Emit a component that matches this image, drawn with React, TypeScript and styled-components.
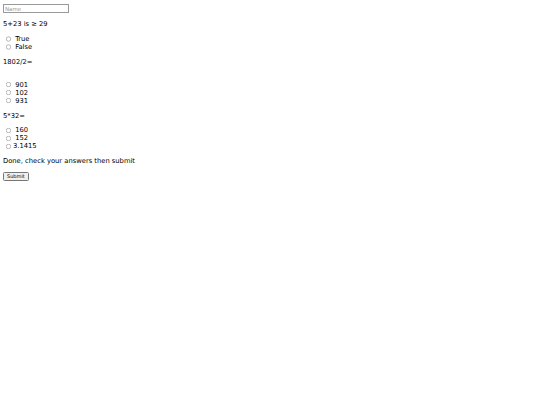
import React from 'react';
import styled, { createGlobalStyle } from 'styled-components';

const GlobalStyle = createGlobalStyle`
  body {
    margin: 4px 3px;
    background: #fff;
    color: #000;
    font-family: "DejaVu Sans", Verdana, sans-serif;
  }
`;

// the page was captured at half scale, so the whole form is zoomed down
const QuizForm = styled.form`
  zoom: 0.5;
  font-size: 13.5px;
`;

const NameInput = styled.input`
  font-family: "DejaVu Sans", Verdana, sans-serif;
  font-size: 11px;
  width: 124px;
  height: 12px;
  padding: 1px 2px;
  border: 1px solid #999;
  color: #000;
  &::placeholder {
    color: #999;
  }
`;

const Question = styled.p`
  margin: 13.8px 0;
  line-height: 16px;
`;

const Choices = styled.div<{ $gap?: boolean }>`
  margin-top: ${(p) => (p.$gap ? '30px' : '0')};
  display: flex;
  flex-direction: column;
`;

const Choice = styled.label`
  display: flex;
  align-items: center;
  height: 16px;
  input {
    margin: 0 4px 0 5px;
    width: 11px;
    height: 11px;
  }
`;

const ChoiceText = styled.span`
  white-space: pre;
`;

const SubmitButton = styled.button`
  font-family: "DejaVu Sans", Verdana, sans-serif;
  font-size: 10px;
  padding: 1px 6px;
  margin-top: -3px;
`;

// the last answer has no space after its radio in the original markup
const quiz = [
  { q: '5+23 is ≥ 29', opts: [' True', ' False'], gap: false },
  { q: '1802/2=', opts: [' 901', ' 102', ' 931'], gap: true },
  { q: '5*32=', opts: [' 160', ' 152', '3.1415'], gap: false },
];

export default function App() {
  return (
    <>
      <GlobalStyle />
      <QuizForm onSubmit={(e) => e.preventDefault()}>
        <NameInput placeholder="Name" />
        {quiz.map((item, i) => (
          <div key={i}>
            <Question>{item.q}</Question>
            <Choices $gap={item.gap}>
              {item.opts.map((o) => (
                <Choice key={o}>
                  <input type="radio" name={'q' + i} />
                  <ChoiceText>{o}</ChoiceText>
                </Choice>
              ))}
            </Choices>
          </div>
        ))}
        <Question>Done, check your answers then submit</Question>
        <SubmitButton type="submit">Submit</SubmitButton>
      </QuizForm>
    </>
  );
}
